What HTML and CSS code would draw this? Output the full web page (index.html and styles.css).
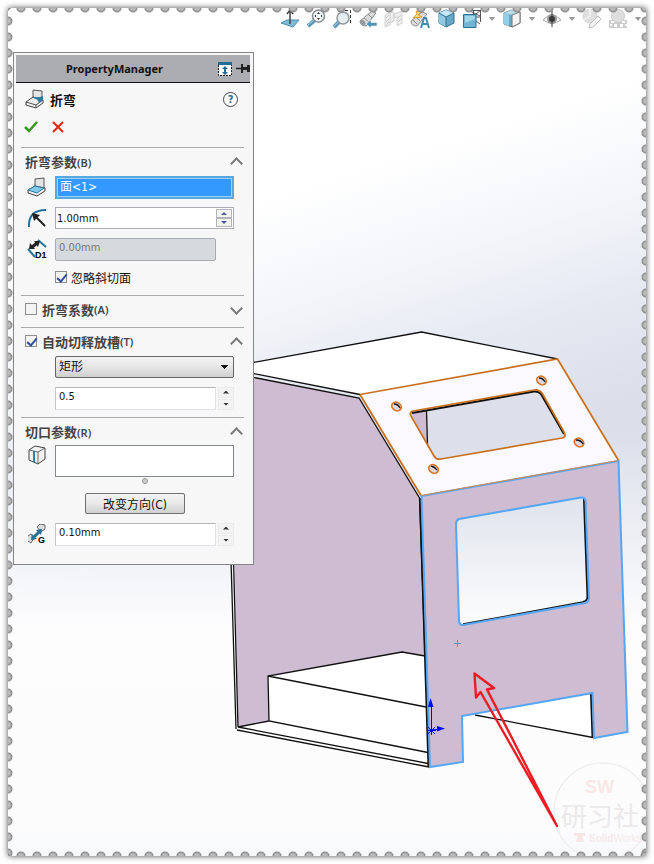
FILE: index.html
```html
<!DOCTYPE html>
<html lang="zh-CN">
<head>
    <meta charset="UTF-8">
    <meta name="viewport" content="width=device-width, initial-scale=1.0">
    <title>PropertyManager - 折弯</title>
    <link rel="stylesheet" href="styles.css">
</head>
<body>

<main class="sheet">

    <!-- sheet metal part -->
    <svg class="model" viewBox="8 8 638 848" role="img" aria-label="SolidWorks 研习社">
        <defs>
            <linearGradient id="windowFill" x1="0" y1="0" x2="0" y2="1">
                <stop offset="0" stop-color="#dfe3ec"/>
                <stop offset="1" stop-color="#fcfdfd"/>
            </linearGradient>
        </defs>

        <!-- side wall -->
        <path class="pink" d="M231 372L254 377L360 398L420 498L427 657L402 652L268 676L269 721L238 728Z"/>
        <path class="white" d="M190 361L190 374L421.500 332L557.500 359L360 394.500Z"/>
        <path class="edge" d="M190 374L421.500 332L557.500 359M190 361L360 394.500M190 365L359 398L419.500 498L429 767"/>
        <path class="white" d="M268 676L402 652L426 656L429 767L237 729L238 727L269 721Z"/>
        <path class="edge" d="M425 656L402 652L268 676L269 721L428 752.500M268 676L426 707M269 721L238 727L428 763.500M237 730L429 767M231 560L236 729M233.500 560L238 727"/>

        <!-- sloped face -->
        <path class="slope" d="M360 394.500L557.500 359L618.500 460.500L421 495.500Z"/>
        <path class="view" d="M413 411L534 390Q539 389 542 393L564 432Q567 437 562 438L441 459Q436 460 434 456L411 416Q409 412 413 411Z"/>
        <path class="pink" d="M411 413L426 411L427.500 445Z"/>
        <path class="thick" d="M412 413L534 391.500Q538 391 541 394L564 434"/>
        <path class="edge" d="M426.500 411L427.500 444"/>
        <g class="orange">
            <path d="M360 394.500L557.500 359L618.500 460.500M421 495.500L360 394.500"/>
            <path d="M413 411L534 390Q539 389 542 393L564 432Q567 437 562 438L441 459Q436 460 434 456L411 416Q409 412 413 411Z"/>
        </g>
        <g class="hole">
            <ellipse cx="396.500" cy="406.500" rx="5" ry="4" transform="rotate(32 396.500 406.500)"/>
            <ellipse cx="541.500" cy="380.500" rx="5" ry="4" transform="rotate(32 541.500 380.500)"/>
            <ellipse cx="579" cy="442.500" rx="5" ry="4" transform="rotate(32 579 442.500)"/>
            <ellipse cx="433.500" cy="469" rx="5" ry="4" transform="rotate(32 433.500 469)"/>
        </g>
        <path class="edge" d="M394 404Q398 404 400 408M539 378Q543 378 545 382M576 440Q581 440 583 444M431 466Q435 467 437 470"/>

        <!-- front face -->
        <path class="white" d="M463 716L592 693L593 738L474 715Z"/>
        <path class="pink" fill-rule="evenodd" d="M421.500 496L618.500 461L627.500 732L594 738L592.500 693L462 716L463 762L430 767ZM459 519L581 497.500Q585 497 585.500 501L589 598Q589 602 585 603L463 625Q459 625 459 620L456 524Q456 520 459 519Z"/>
        <path fill="url(#windowFill)" d="M459 519L581 497.500Q585 497 585.500 501L589 598Q589 602 585 603L463 625Q459 625 459 620L456 524Q456 520 459 519Z"/>
        <path class="thick" d="M584 499L587.500 597Q587 601 583 602M591 694L592.500 737M420 498L428.500 767"/>
        <path class="edge" d="M463 624L583 602M475 715L593 737.500"/>
        <g class="blue">
            <path d="M421.500 496L618.500 461L627.500 732L594 738L592.500 693L462 716L463 762L430 767Z"/>
            <path d="M459 519L581 497.500Q585 497 585.500 501L589 598Q589 602 585 603L463 625Q459 625 459 620L456 524Q456 520 459 519Z"/>
        </g>
        <path class="ridge" d="M421.500 495.500L618.500 460.500"/>
        <path class="cross" d="M454 643.500H461M457.500 640V647"/>

        <!-- origin -->
        <g class="origin">
            <path d="M431.500 730V704M431.500 730L440 729M427 730.500H436M428 727L435 734M435 727L428 734M431.500 726V735"/>
            <path class="tip" d="M430.500 698L433.500 707H428ZM445 728.500L437 726V731.500Z"/>
        </g>

        <!-- watermark -->
        <g class="mark">
            <circle cx="602.500" cy="811.500" r="48.500"/>
            <text class="mark-sw" x="585" y="793">SW</text>
            <text class="mark-name" x="561" y="826">研习社</text>
            <path class="mark-logo" d="M574 833H585V836H582L584 842H576L578 836H574Z"/>
            <text class="mark-sub" x="589" y="842"><tspan class="strong">Solid</tspan>Works</text>
        </g>

        <path class="pointer" d="M557 826L480.500 692L476 697.500L474.500 673.500L494 688L487 689.500Z"/>
    </svg>

    <nav class="toolbar" aria-label="视图">
        <button class="tool" type="button" aria-label="正视于">
            <svg viewBox="0 0 20 20"><path d="M1 14L7 11H19L13 18Z" fill="#7fbad6" stroke="#4d8fae"/><path d="M10 15V2M7 5L10 1L13 5" fill="none" stroke="#444" stroke-width="1.500"/></svg>
        </button>
        <button class="tool" type="button" aria-label="整屏显示全图">
            <svg viewBox="0 0 20 20"><path d="M2 17L9 11" stroke="#5796b6" stroke-width="4"/><path d="M2 16L8 11" stroke="#b5dcec"/><circle cx="12.500" cy="7" r="6" fill="#f3f7f8" stroke="#858c90" stroke-width="1.500"/><path d="M12.500 3L14 5H11ZM12.500 11L14 9H11ZM8.500 7L10 5.500V8.500ZM16.500 7L15 5.500V8.500Z" fill="#333"/></svg>
        </button>
        <button class="tool" type="button" aria-label="局部放大">
            <svg viewBox="0 0 20 20"><path d="M2 18L8 12" stroke="#5796b6" stroke-width="4"/><path d="M2 17L8 12" stroke="#b5dcec"/><circle cx="11" cy="9" r="6" fill="#e5edf0" stroke="#909699" stroke-width="1.500"/><path d="M13 1.500H18.500V14" fill="none" stroke="#333" stroke-dasharray="3 2"/></svg>
        </button>
        <button class="tool" type="button" aria-label="上一视图">
            <svg viewBox="0 0 20 20"><path d="M2 12L14 2L18 4L8 17Q2 17 2 12Z" fill="#dcdcdc" stroke="#888"/><path d="M6 9L11 13M10 5L14 9" stroke="#888"/><ellipse cx="5" cy="13.500" rx="2" ry="3" fill="#999" transform="rotate(-35 5 13.500)"/><path d="M8 15L13 11V13.500H19V17H13V19Z" fill="#4d93b8" stroke="#fff" stroke-width=".5"/></svg>
        </button>
        <button class="tool" type="button" aria-label="剖面视图">
            <svg viewBox="0 0 20 20"><path d="M1 6L6 3V16L1 18ZM6 3H10V12L6 14M10 5L18 2V14L13 17V8L10 9Z" fill="#ececec" stroke="#d2d2d2"/><path d="M2 9L5 6M2 13L5 10M2 16L5 13M14 9L17 6M14 13L17 10" stroke="#ccc"/></svg>
        </button>
        <button class="tool" type="button" aria-label="动态注解视图">
            <svg viewBox="0 0 20 20"><path d="M1 12L12 3L17 5L7 17Q1 17 1 12Z" fill="#ddd" stroke="#888"/><path d="M6 8L10 12M3 11L7 15" stroke="#888"/><path d="M6 2L11 3L8 6L12 8L3 9L7 5Z" fill="#ffe37c" stroke="#e9982f"/><path d="M11 19L14 9H16L19 19M12 15H18" fill="none" stroke="#408bb5" stroke-width="2"/></svg>
        </button>
        <button class="tool" type="button" aria-label="视图定向">
            <svg viewBox="0 0 20 20"><path d="M10 1L18 4V14L10 18L3 14V4Z" fill="#67a8c7" stroke="#356f8c"/><path d="M3 4L10 1L18 4L10 8Z" fill="#c4e7f5"/><path d="M3 4L10 8V18L3 14Z" fill="#8fc8e1"/><path d="M3 4L10 8L18 4M10 8V18" fill="none" stroke="#356f8c"/></svg>
        </button>
        <button class="tool" type="button" aria-label="标准视图">
            <svg viewBox="0 0 20 20"><path d="M6.500 1.500H18.500V13M6 1L18 7M14 5L19 1M11.500 2V7M14 12L18 15M14 8H19" fill="none" stroke="#555"/><path d="M1.500 5.500H14V18.500H1.500Z" fill="#72b4d3" stroke="#2e6e90"/><path d="M3 7H13V10L3 14Z" fill="#a1d5ea"/></svg>
        </button>
        <button class="caret" type="button" aria-label="更多标准视图"></button>
        <button class="tool" type="button" aria-label="显示样式">
            <svg viewBox="0 0 20 20"><path d="M2 4L9 1L18 3V14L10 18L2 15Z" fill="#69a9c7" stroke="#627984"/><path d="M2 4L9 1L18 3L10 6Z" fill="#b8dce9"/><path d="M10 6L18 3V14L10 18Z" fill="#f3f3f3" stroke="#777"/><path d="M2 4L7 6V17L2 15Z" fill="#94d0e9"/></svg>
        </button>
        <button class="caret" type="button" aria-label="更多显示样式"></button>
        <button class="tool" type="button" aria-label="隐藏/显示项目">
            <svg viewBox="0 0 20 20"><path d="M1 11Q10 1 19 11Q10 18 1 11Z" fill="#f4f4f4" stroke="#aaa"/><circle cx="10" cy="10" r="5" fill="#999"/><circle cx="10" cy="10" r="3" fill="#3c3c3c"/><path d="M10 2V18" stroke="#333"/></svg>
        </button>
        <button class="caret" type="button" aria-label="更多项目"></button>
        <button class="tool" type="button" aria-label="编辑外观">
            <svg viewBox="0 0 20 20"><circle cx="8" cy="7" r="7" fill="#dfdfdf" stroke="#d3d3d3"/><path d="M8 0V7L2 11" fill="none" stroke="#eee" stroke-width="2"/><path d="M8 15L16 7L19 10L11 18L7 19Z" fill="#f5f5f5" stroke="#bbb"/></svg>
        </button>
        <button class="tool" type="button" aria-label="应用布景">
            <svg viewBox="0 0 20 20"><path d="M1 11H19V19H1Z" fill="#ccc"/><path d="M3 12H6V14H3ZM14 12H17V14H14ZM6 15H9V18H6ZM12 15H15V18H12ZM2 15H4V17H2ZM17 15H19V17H17Z" fill="#fff"/><circle cx="10" cy="7" r="6.500" fill="#dedede" stroke="#ccc"/></svg>
        </button>
        <button class="caret" type="button" aria-label="更多布景"></button>
    </nav>

    <form class="panel">
        <header class="panel-header">
            <h1>PropertyManager</h1>
            <button class="head-btn" type="button" aria-label="展开">
                <svg viewBox="0 0 14 14"><path d="M0 0H14V3H0Z" fill="#256b91"/><path d="M.500 3V13.500H13.500V3" fill="#fff" stroke="#222" stroke-dasharray="2 1"/><path d="M7 4L10 7H8V10H10L7 13L4 10H6V7H4Z" fill="#256b91"/></svg>
            </button>
            <button class="head-btn" type="button" aria-label="固定">
                <svg viewBox="0 0 14 14"><path d="M0 6.500H6" stroke="#222" stroke-width="1.500"/><path d="M5 2H7V5H11V3H14V10H11V8H7V11H5Z" fill="#222"/></svg>
            </button>
        </header>

        <div class="title">
            <svg class="icon" viewBox="0 0 20 20"><path d="M8 1L17 2V10L8 9Z" fill="#e4e4e4" stroke="#555"/><path d="M1 13L8 8L18 11V14L11 19L1 16Z" fill="#eee" stroke="#444"/><path d="M1 13L11 16L18 11M11 16V19" fill="none" stroke="#555"/><path d="M8 8Q13 9 18 7V11L14 14Q13 10 8 9Z" fill="#2b7ba3"/></svg>
            <h2>折弯</h2>
            <button class="help" type="button" aria-label="帮助">?</button>
        </div>
        <div class="confirm">
            <button class="mark-btn" type="submit" aria-label="确定">
                <svg viewBox="0 0 14 14"><path d="M1 7L5 11L13 2" fill="none" stroke="#36981c" stroke-width="2.500"/></svg>
            </button>
            <button class="mark-btn" type="reset" aria-label="取消">
                <svg viewBox="0 0 14 14"><path d="M2 2L12 12M12 2L2 12" fill="none" stroke="#d92a10" stroke-width="2"/></svg>
            </button>
        </div>

        <section class="group">
            <div class="group-head">
                <h3>折弯参数<small>(B)</small></h3>
                <button class="fold" type="button" aria-label="折叠折弯参数"></button>
            </div>
            <div class="row">
                <svg class="icon" viewBox="0 0 20 20"><path d="M8 2L17 1V11L8 12Z" fill="#e4e4e4" stroke="#555"/><path d="M1 13L8 9L18 11V14L10 19L1 16Z" fill="#eee" stroke="#444"/><path d="M1 13L8 9L17 11L10 16Z" fill="#80cce8" stroke="#2b7ba3"/></svg>
                <input class="field picked" type="text" value="面&lt;1&gt;" aria-label="固定面" readonly>
            </div>
            <div class="row">
                <svg class="icon" viewBox="0 0 20 20"><path d="M2 19Q1 2 19 2" fill="none" stroke="#267297" stroke-width="2"/><path d="M7 7L18 18" stroke="#222" stroke-width="2"/><path d="M5 5L13 7L7 13Z" fill="#222"/></svg>
                <div class="field spin-box">
                    <input type="text" value="1.00mm" aria-label="折弯半径">
                    <span class="spin boxed"><button type="button" aria-label="增加"></button><button type="button" aria-label="减少"></button></span>
                </div>
            </div>
            <div class="row">
                <svg class="icon" viewBox="0 0 20 20"><path d="M1 10L8 18M11 1L19 8" stroke="#267297" stroke-width="2"/><path d="M4 9L10 4" stroke="#222" stroke-width="3"/><path d="M2 10L3 4L8 10ZM7 2L13 2L11 8Z" fill="#222"/><text class="icon-text" x="8" y="19">D1</text></svg>
                <input class="field short" type="text" value="0.00mm" aria-label="厚度" disabled>
            </div>
            <div class="row check-row">
                <label><input type="checkbox" checked> 忽略斜切面</label>
            </div>
        </section>

        <section class="group">
            <div class="group-head">
                <label><input type="checkbox"> 折弯系数<small>(A)</small></label>
                <button class="fold closed" type="button" aria-label="展开折弯系数"></button>
            </div>
        </section>

        <section class="group">
            <div class="group-head">
                <label><input type="checkbox" checked> 自动切释放槽<small>(T)</small></label>
                <button class="fold" type="button" aria-label="折叠自动切释放槽"></button>
            </div>
            <div class="row indent">
                <select class="field" aria-label="释放槽类型">
                    <option>矩形</option>
                </select>
            </div>
            <div class="row indent">
                <input class="field short" type="text" value="0.5" aria-label="释放槽比例">
                <span class="spin"><button type="button" aria-label="增加"></button><button type="button" aria-label="减少"></button></span>
            </div>
        </section>

        <section class="group last">
            <div class="group-head">
                <h3>切口参数<small>(R)</small></h3>
                <button class="fold" type="button" aria-label="折叠切口参数"></button>
            </div>
            <div class="row top">
                <svg class="icon" viewBox="0 0 20 20"><path d="M2 5L8 1L18 3V14L11 19L2 15Z" fill="#f2f2f2" stroke="#444"/><path d="M2 5L11 7L18 3M11 7V19" fill="none" stroke="#666"/><path d="M7 6V17" stroke="#2388b8" stroke-width="2"/></svg>
                <div class="list-wrap">
                    <textarea class="field list" aria-label="切口边线"></textarea>
                    <span class="grip"></span>
                </div>
            </div>
            <div class="row center">
                <button class="flip" type="button">改变方向(C)</button>
            </div>
            <div class="row">
                <svg class="icon" viewBox="0 0 20 20"><path d="M10 3L13 0L18 1V5L14 8ZM1 12L4 10L7 14L4 19L1 17" fill="#ddd" stroke="#666"/><path d="M5 15L14 6" stroke="#267297" stroke-width="3"/><path d="M4 16L5 10L10 15ZM15 5L9 6L14 11Z" fill="#267297"/><text class="icon-text" x="11" y="19">G</text></svg>
                <input class="field short" type="text" value="0.10mm" aria-label="切口缝隙">
                <span class="spin"><button type="button" aria-label="增加"></button><button type="button" aria-label="减少"></button></span>
            </div>
        </section>
    </form>

    <div class="perforation"></div>
</main>

</body>
</html>
```

FILE: styles.css
```css
* {
    box-sizing: border-box;
}

body {
    margin: 0;
    padding: 8px;
    background: #fff;
    color: #111;
    font-family: "DejaVu Sans Condensed", "Noto Sans", "Noto Sans CJK SC", sans-serif;
    font-size: 12px;
    overflow-x: hidden;
}

button, input, select, textarea {
    margin: 0;
    font-family: inherit;
    font-size: 11px;
    color: inherit;
}

button {
    padding: 0;
    border: 0;
    background: none;
}

.sheet {
    display: grid;
    grid-template-columns: 1fr;
    grid-template-rows: auto 1fr;
    min-height: calc(100vh - 16px);
    background:
        linear-gradient(180deg, rgba(253, 253, 254, 0) 50%, #fdfdfe 73%, #fcfcfd 96%, #f8f9fb 100%),
        linear-gradient(162deg, #fff 26%, #f3f5f9 37%, #e5e9f2 46%, #dcdfea 56%);
    box-shadow: 0 0 6px rgba(0, 0, 0, 0.7);
}

/* stamp edge, over everything else on the sheet */
.perforation {
    grid-area: 1 / 1 / 3 / 2;
    pointer-events: none;
    background:
        radial-gradient(circle at 50% 0, #bbb 2px, #8c8c8c 4px, transparent 5px) 5px 0 / 16px 6px repeat-x,
        radial-gradient(circle at 50% 100%, #bbb 2px, #8c8c8c 4px, transparent 5px) 5px 100% / 16px 6px repeat-x,
        radial-gradient(circle at 0 50%, #bbb 2px, #8c8c8c 4px, transparent 5px) 0 5px / 6px 16px repeat-y,
        radial-gradient(circle at 100% 50%, #bbb 2px, #8c8c8c 4px, transparent 5px) 100% 5px / 6px 16px repeat-y;
}

/* model */

.model {
    grid-area: 1 / 1 / 3 / 2;
    display: block;
    width: 100%;
}

.pink { fill: #cebcd2; }
.white { fill: #fff; }
.slope { fill: #fbf9fd; }
.view { fill: #dde0eb; }

.edge, .thick {
    fill: none;
    stroke: #111;
    stroke-width: 1.3;
}

.thick {
    stroke-width: 2;
}

.orange, .ridge {
    fill: none;
    stroke: #c8701c;
    stroke-width: 1.7;
}

.hole {
    fill: #ddd5e2;
    stroke: #d8731b;
    stroke-width: 1.7;
}

.blue {
    fill: none;
    stroke: #55a6f5;
    stroke-width: 2;
}

.ridge {
    stroke: #d68a46;
    stroke-width: 1;
}

.cross {
    fill: none;
    stroke: #5096dc;
}

.origin {
    fill: none;
    stroke: #00f;
}

.tip {
    fill: #00f;
    stroke: none;
}

.pointer {
    fill: none;
    stroke: #ec1c24;
    stroke-width: 2.4;
    stroke-linejoin: round;
}

.mark {
    fill: #ebe9ea;
}

.mark circle {
    fill: none;
    stroke: #f0eeef;
    stroke-width: 1.5;
}

.mark-sw {
    fill: #fbe6e6;
    font: 18px "Liberation Sans", sans-serif;
    font-weight: bold;
}

.mark-name {
    font-family: "Noto Sans CJK SC", sans-serif;
    font-size: 26px;
}

.mark-sub {
    fill: #f5e9ea;
    font: 10px "Liberation Sans", sans-serif;
}

.mark-logo { fill: #f8e4e5; }
.strong { font-weight: bold; }

/* view toolbar */

.toolbar {
    grid-area: 1 / 1;
    display: flex;
    justify-content: flex-end;
    align-items: center;
    gap: 6px;
    padding: 1px 4px 0 0;
}

.tool, .tool svg {
    display: block;
    width: 20px;
    height: 20px;
}

.caret {
    width: 8px;
    height: 20px;
}

.caret::before {
    content: "";
    display: block;
    margin: 0 auto;
    width: 6px;
    height: 4px;
    background: #999;
    clip-path: polygon(0 0, 100% 0, 50% 100%);
}

/* property panel */

.panel {
    grid-area: 2 / 1;
    align-self: start;
    justify-self: start;
    width: 241px;
    margin: 23px 0 16px 5px;
    padding: 2px 3px 0 2px;
    background: #f7f7f7;
    border: 1px solid #858585;
}

.panel-header {
    display: flex;
    align-items: center;
    gap: 4px;
    height: 28px;
    padding-left: 50px;
    background: #acadb1;
    border-bottom: 1px solid #111;
}

h1, h2, h3 {
    margin: 0;
    font-size: 13px;
    font-weight: bold;
}

h1 {
    flex: 1;
    font-family: "Noto Sans", sans-serif;
    font-size: 11px;
}

.head-btn, .head-btn svg {
    display: block;
    width: 14px;
    height: 14px;
}

.title {
    display: flex;
    align-items: center;
    gap: 5px;
    height: 32px;
    padding: 0 12px 0 9px;
}

.title h2 {
    flex: 1;
}

.help {
    width: 15px;
    height: 15px;
    border: 1px solid #445;
    border-radius: 50%;
    color: #256b91;
    background: #fff;
    font-weight: bold;
    line-height: 13px;
}

.confirm {
    display: flex;
    align-items: center;
    gap: 13px;
    height: 24px;
    margin-bottom: 8px;
    padding-left: 8px;
}

.mark-btn, .mark-btn svg {
    display: block;
    width: 14px;
    height: 14px;
}

.icon {
    flex: none;
    width: 20px;
    height: 20px;
}

.icon-text {
    font: bold 9px "Liberation Sans", sans-serif;
}

.group {
    display: flex;
    flex-direction: column;
    gap: 7px;
    margin: 0 6px 0 5px;
    padding: 3px 0 7px;
    border-top: 1px solid #a9a9a9;
}

.group.last {
    padding-bottom: 18px;
}

.group-head {
    display: flex;
    align-items: center;
    justify-content: space-between;
    height: 20px;
    margin-bottom: -3px;
    padding: 0 3px 0 4px;
    color: #444;
}

.group-head:last-child {
    margin-bottom: 1px;
}

.group-head label {
    font-size: 13px;
    font-weight: bold;
}

small {
    font-family: "Noto Sans", sans-serif;
    font-size: 11px;
    font-weight: 600;
}

label {
    display: flex;
    align-items: center;
}

.fold {
    width: 10px;
    height: 10px;
}

.fold::before {
    content: "";
    display: block;
    width: 7px;
    height: 7px;
    margin: 3px 0 0 1px;
    border: solid #777;
    border-width: 2px 0 0 2px;
    transform: rotate(45deg);
}

.fold.closed::before {
    margin-top: -1px;
    transform: rotate(225deg);
}

.row {
    display: flex;
    align-items: center;
    gap: 8px;
    min-height: 24px;
    padding: 0 10px 0 6px;
}

.top {
    align-items: flex-start;
}

.indent, .check-row {
    padding-left: 34px;
}

.check-row {
    min-height: 20px;
    padding-bottom: 2px;
}

.center {
    justify-content: center;
    padding-left: 15px;
}

input[type="checkbox"] {
    appearance: none;
    width: 12px;
    height: 12px;
    margin-right: 5px;
    border: 1px solid #8f8f8f;
    background: #f4f4f4;
}

.check-row input[type="checkbox"] {
    margin-right: 4px;
}

input[type="checkbox"]:checked::before {
    content: "";
    display: block;
    width: 4px;
    height: 8px;
    margin: 0 3px;
    border: solid #33509c;
    border-width: 0 2px 2px 0;
    transform: rotate(40deg);
}

.field {
    flex: 1;
    min-width: 0;
    height: 22px;
    padding: 0 3px;
    border: 1px solid #abadb3;
    background: #fff;
}

.picked {
    height: 23px;
    padding-bottom: 4px;
    border: 2px solid #55a9e2;
    outline: 1px solid #9fd0f5;
    outline-offset: -3px;
    background: #3399ff;
    color: #fff;
    font-size: 12px;
}

.spin-box {
    display: flex;
    align-items: center;
    padding: 0 1px;
}

.spin-box input {
    flex: 1;
    min-width: 0;
    padding: 0;
    border: 0;
    background: none;
}

.short {
    flex: 0 1 161px;
    height: 23px;
    padding-bottom: 3px;
    border-color: #b4b6bd #dfe1e6 #dfe1e6 #c4c6cc;
}

.short:disabled {
    border: 1px solid #aaacb2;
    border-radius: 2px;
    background: #d6d9dd;
    color: #777;
}

select.field {
    appearance: none;
    padding: 0 3px;
    border: 1px solid #666;
    border-radius: 2px;
    font-size: 12px;
    background:
        linear-gradient(to bottom right, #111 50%, transparent 50%) right 4px center / 4px 4px no-repeat,
        linear-gradient(to bottom left, #111 50%, transparent 50%) right 8px center / 4px 4px no-repeat,
        linear-gradient(#f3f3f3, #e6e6e6 50%, #cfcfcf);
}

.spin {
    display: flex;
    flex-direction: column;
    gap: 1px;
    width: 16px;
    margin-left: -6px;
}

.spin button {
    height: 11px;
    border: 1px solid #ebebeb;
    background: #f3f3f3;
}

.spin button::before {
    content: "";
    display: block;
    width: 6px;
    height: 3px;
    margin: 0 auto;
    background: #333;
    clip-path: polygon(50% 0, 100% 100%, 0 100%);
}

.spin button:last-child::before {
    clip-path: polygon(0 0, 100% 0, 50% 100%);
}

.boxed {
    margin-left: 0;
    gap: 0;
}

.boxed button {
    height: 9px;
    border-color: #b3b5bb;
}

.boxed button::before {
    background: #4a5f9f;
}

.list-wrap {
    flex: 1;
    display: flex;
    flex-direction: column;
    align-items: center;
    gap: 1px;
}

.list {
    display: block;
    flex: none;
    width: 100%;
    height: 32px;
    border-color: #828790;
    resize: none;
}

.grip {
    width: 6px;
    height: 6px;
    border: 1px solid #999;
    border-radius: 50%;
    background: #ccc;
}

.flip {
    width: 100px;
    height: 21px;
    border: 1px solid #707070;
    border-radius: 2px;
    background: linear-gradient(#f3f3f3, #e8e8e8 50%, #d0d0d0);
    font-size: 12px;
}
```
